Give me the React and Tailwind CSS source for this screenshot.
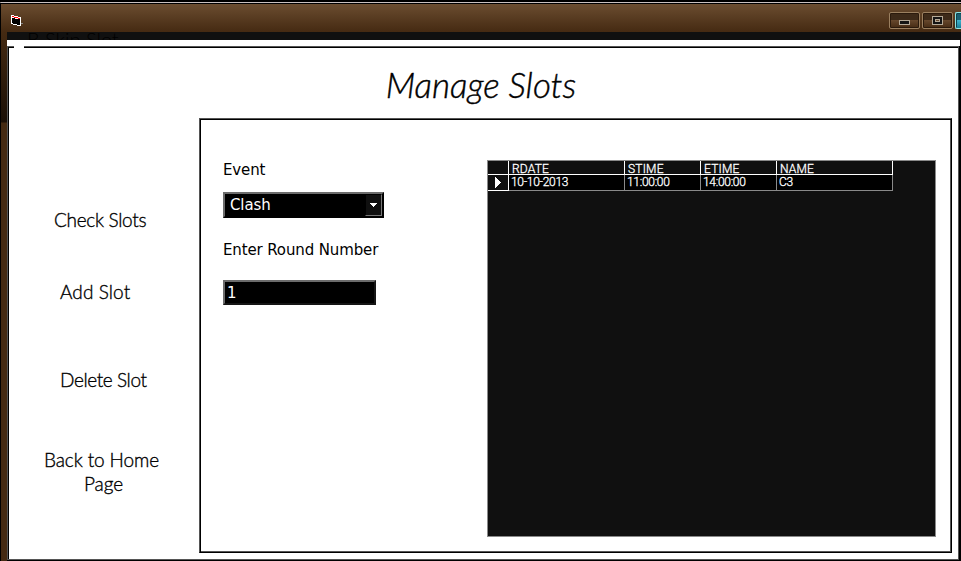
import React from 'react';

const columns = [
  { name: 'RDATE', value: '10-10-2013', width: 'w-[116px]' },
  { name: 'STIME', value: '11:00:00', width: 'w-[76px]' },
  { name: 'ETIME', value: '14:00:00', width: 'w-[76px]' },
  { name: 'NAME', value: 'C3', width: 'w-[116px]' },
];

function TitleBar() {
  return (
    <header className="flex h-[28px] items-start bg-gradient-to-b from-[#6b4d30] to-[#452a12] pl-[9px]">
      <svg className="mt-[10px] h-[13px] w-[15px]" viewBox="0 0 15 13" shapeRendering="crispEdges">
        <path d="M1 1h3v1h4v1h3v9H7v-1H3v-1H1z" fill="#fff" />
        <path d="M2 4h3v1h5v6H7v-1H3V9H2z" fill="#000" />
        <path d="M2 2h2v1H2zM4 3h4v1H4zM8 4h2v1H8z" fill="#f00" />
        <path d="M11 9h2v1h-2z" fill="#888" />
      </svg>
      <div className="ml-auto flex gap-[2px] pt-[8px]">
        <div className="flex h-[17px] w-[31px] items-end justify-center rounded-[2px] border border-[#9b8060] bg-[linear-gradient(#3d2a19_0_45%,#68492e_46%,#452a12)] pb-[3px] shadow-[inset_0_0_0_1px_#2b1a0c]">
          <div className="h-[5px] w-[11px] border border-[#b5aa98] bg-[#151515]" />
        </div>
        <div className="flex h-[17px] w-[31px] items-center justify-center rounded-[2px] border border-[#9b8060] bg-[linear-gradient(#3d2a19_0_45%,#68492e_46%,#452a12)] shadow-[inset_0_0_0_1px_#2b1a0c]">
          <div className="flex h-[9px] w-[11px] items-center justify-center border border-[#b5aa98] bg-[#151515]">
            <div className="h-[3px] w-[5px] border border-[#b5aa98] bg-[#68492e]" />
          </div>
        </div>
        <div className="h-[17px] w-[6px] rounded-l-[2px] border border-r-0 border-[#8ee6e4] bg-[linear-gradient(#1b6172_0_45%,#3fb6d0_46%,#1c7f98)] shadow-[inset_1px_1px_0_#0c4450]" />
      </div>
    </header>
  );
}

function Sidebar() {
  return (
    <nav className="w-[190px] shrink-0 pt-[90px] font-['Lato',sans-serif] text-[19px] leading-[24px] font-light text-black [-webkit-text-stroke:0.35px_black]">
      <div className="h-[72px] pl-[45px] tracking-[-0.3px]">Check Slots</div>
      <div className="h-[88px] pl-[51px] tracking-[0.1px]">Add Slot</div>
      <div className="h-[80px] pl-[51px] tracking-[-0.4px]">Delete Slot</div>
      <div className="w-[184px] pl-[1px] text-center tracking-[-0.1px]">Back to Home<br /><span className="pl-[4px]">Page</span></div>
    </nav>
  );
}

function Form() {
  return (
    <section className="w-[264px] shrink-0 font-['DejaVu_Sans',sans-serif] text-[15px] tracking-[-0.13px] text-black">
      <div className="h-[32px] leading-[20px]">Event</div>
      <div className="flex h-[26px] w-[161px] items-stretch border-2 border-t-[#6c6c6c] border-r-black border-b-black border-l-[#6c6c6c] bg-black text-white">
        <span className="grow pl-[5px] leading-[22px]">Clash</span>
        <div className="flex w-[17px] items-center justify-center border border-t-black border-r-[#777] border-b-[#777] border-l-black bg-[#101010]">
          <svg width="7" height="4" viewBox="0 0 7 4" shapeRendering="crispEdges"><path d="M0 0h7L3.5 4z" fill="#fff" /></svg>
        </div>
      </div>
      <div className="mt-[22px] h-[40px] leading-[20px]">Enter Round Number</div>
      <div className="h-[25px] w-[153px] border-2 border-t-[#6c6c6c] border-r-[#151515] border-b-[#151515] border-l-[#6c6c6c] bg-black pl-[2px] leading-[22px] text-white">1</div>
    </section>
  );
}

function DataGrid() {
  return (
    <section className="h-[377px] w-[449px] border border-[#8a8a8a] bg-[#101010] font-['Roboto',sans-serif] text-[12px] font-light text-white [-webkit-text-stroke:0.3px_white]">
      <div className="flex h-[14px] w-[405px] border-b border-white leading-[16px]">
        <div className="w-[21px] border-r border-white" />
        {columns.map((c) => (
          <div key={c.name} className={`${c.width} border-r border-white pl-[3px] tracking-[0.2px]`}>{c.name}</div>
        ))}
      </div>
      <div className="flex h-[16px] w-[405px] leading-[14px]">
        <div className="flex w-[21px] items-center justify-end border-r border-b border-white pr-[7px]">
          <svg width="6" height="11" viewBox="0 0 6 11" shapeRendering="crispEdges"><path d="M0 0l6 5.5L0 11z" fill="#fff" /></svg>
        </div>
        {columns.map((c) => (
          <div key={c.name} className={`${c.width} border-r border-b border-[#8a8a8a] bg-black pl-[2px] tracking-[-0.3px]`}>{c.value}</div>
        ))}
      </div>
    </section>
  );
}

export default function App() {
  return (
    <div className="flex h-[561px] w-[961px] flex-col overflow-hidden bg-black">
      <div className="mt-[2px] mb-px h-px shrink-0 rounded-tl-[3px] bg-[#c9c0c0]" />
      <div className="ml-px shrink-0"><TitleBar /></div>
      <div className="flex h-[529px] shrink-0">
        <div className="ml-px w-[6px] shrink-0 bg-[linear-gradient(#452a12,#1a0f06_90px,#452a12_91px)]" />
        <div className="flex w-[954px] flex-col">
          <div className="h-[8px] overflow-hidden bg-[#101010] pl-[20px] font-['Lato',sans-serif] text-[20px] leading-[14px] font-light text-black">B Skip Slot</div>
          <div className="h-[6px] w-[953px] bg-white" />
          <main className="relative h-[514px] w-[952px] border border-[#555] bg-white shadow-[inset_1px_1px_0_#000]">
            <div className="absolute -top-px left-[6px] h-[2px] w-[10px] bg-white" />
            <h1 className="h-[71px] pt-[15px] pr-[4px] text-center font-['Lato',sans-serif] text-[35px] leading-[44px] font-light text-black italic [-webkit-text-stroke:0.4px_black]">Manage Slots</h1>
            <div className="flex pl-px">
              <Sidebar />
              <div className="flex h-[435px] w-[753px] shrink-0 border border-t-[#555] border-r-black border-b-black border-l-[#555] pt-[41px] pl-[23px] shadow-[inset_1px_1px_0_#000,inset_-1px_-1px_0_#555]">
                <Form />
                <DataGrid />
              </div>
            </div>
          </main>
        </div>
      </div>
    </div>
  );
}
